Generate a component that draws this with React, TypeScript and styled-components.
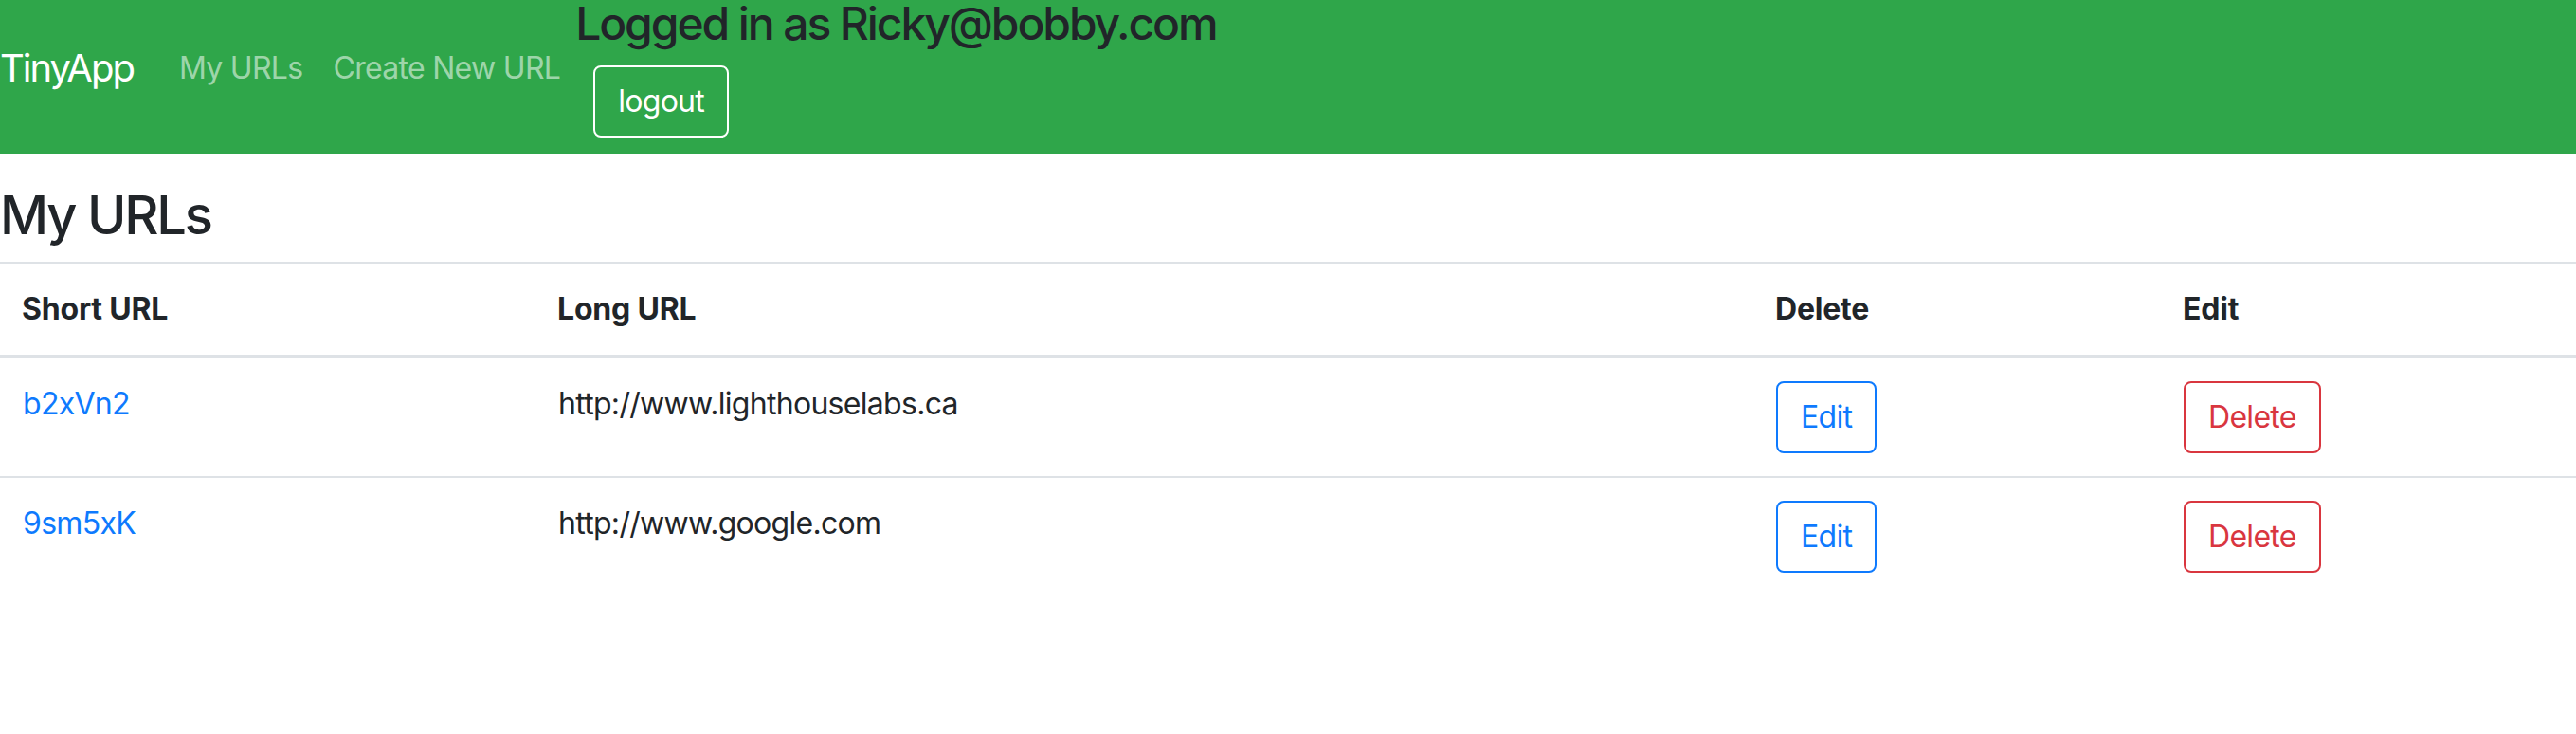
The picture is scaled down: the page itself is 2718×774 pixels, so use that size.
import React from "react";
import styled, { createGlobalStyle } from "styled-components";

const GlobalStyle = createGlobalStyle`
  html, body {
    margin: 0;
    padding: 0;
    background: #ffffff;
  }
  body {
    font-family: Inter, "Noto Sans", "Liberation Sans", sans-serif;
    font-size: 32px;
    line-height: 48px;
    letter-spacing: -0.7px;
    color: #212529;
  }
  * { box-sizing: border-box; }
`;

const Navbar = styled.nav`
  display: flex;
  align-items: center;
  background: #2fa64a;
  padding: 0 0 17px 0;
`;

const Brand = styled.a`
  font-size: 40px;
  line-height: 60px;
  letter-spacing: -2px;
  padding: 10px 0;
  margin-right: 32px;
  color: #ffffff;
  text-decoration: none;
  white-space: nowrap;
`;

const NavLink = styled.a`
  padding: 16px;
  font-size: 32px;
  line-height: 48px;
  color: rgba(255, 255, 255, 0.55);
  text-decoration: none;
  white-space: nowrap;
`;

const UserBlock = styled.div`
  display: flex;
  flex-direction: column;
  align-items: flex-start;
`;

const LoggedIn = styled.h4`
  margin: -4px 0 15px 0;
  font-size: 48px;
  line-height: 57.6px;
  letter-spacing: -2.1px;
  font-weight: 500;
  color: #212529;
  white-space: nowrap;
`;

const LogoutButton = styled.button`
  margin-left: 19px;
  font-family: inherit;
  font-size: 32px;
  line-height: 48px;
  letter-spacing: -0.7px;
  padding: 12px 24px;
  border: 2px solid #ffffff;
  border-radius: 8px;
  background: transparent;
  color: #ffffff;
`;

const Main = styled.main`
  padding-top: 32px;
`;

const Title = styled.h3`
  margin: 0 0 15px 0;
  font-size: 56px;
  line-height: 67.2px;
  letter-spacing: -2.2px;
  font-weight: 500;
`;

const Table = styled.table`
  width: 100%;
  border-collapse: collapse;
  table-layout: fixed;
`;

const HeadCell = styled.th`
  text-align: left;
  vertical-align: bottom;
  padding: 24px 24px 24px 23px;
  font-weight: 700;
  letter-spacing: -0.2px;
  border-top: 2px solid #dee2e6;
  border-bottom: 4px solid #dee2e6;
  white-space: nowrap;
`;

const Cell = styled.td`
  vertical-align: top;
  padding: 24px;
  border-top: 2px solid #dee2e6;
  white-space: nowrap;
`;

const ShortLink = styled.a`
  color: #0e7afe;
  text-decoration: none;
`;

const OutlineButton = styled.button<{ $tone: "primary" | "danger" }>`
  font-family: inherit;
  font-size: 32px;
  line-height: 48px;
  letter-spacing: -0.7px;
  padding: 12px 24px;
  border-radius: 8px;
  background: transparent;
  border: 2px solid ${(p) => (p.$tone === "primary" ? "#0e7afe" : "#d9363f")};
  color: ${(p) => (p.$tone === "primary" ? "#0e7afe" : "#d9363f")};
`;

const urls = [
  { id: "b2xVn2", long: "http://www.lighthouselabs.ca" },
  { id: "9sm5xK", long: "http://www.google.com" },
];

export default function App() {
  return (
    <>
      <GlobalStyle />
      <Navbar>
        <Brand href="#">TinyApp</Brand>
        <NavLink href="#">My URLs</NavLink>
        <NavLink href="#">Create New URL</NavLink>
        <UserBlock>
          <LoggedIn>Logged in as Ricky@bobby.com</LoggedIn>
          <LogoutButton>logout</LogoutButton>
        </UserBlock>
      </Navbar>
      <Main>
        <Title>My URLs</Title>
        <Table>
          <colgroup>
            <col style={{ width: 565 }} />
            <col style={{ width: 1285 }} />
            <col style={{ width: 430 }} />
            <col />
          </colgroup>
          <thead>
            <tr>
              <HeadCell>Short URL</HeadCell>
              <HeadCell>Long URL</HeadCell>
              <HeadCell>Delete</HeadCell>
              <HeadCell>Edit</HeadCell>
            </tr>
          </thead>
          <tbody>
            {urls.map((u) => (
              <tr key={u.id}>
                <Cell>
                  <ShortLink href="#">{u.id}</ShortLink>
                </Cell>
                <Cell>{u.long}</Cell>
                <Cell>
                  <OutlineButton $tone="primary">Edit</OutlineButton>
                </Cell>
                <Cell>
                  <OutlineButton $tone="danger">Delete</OutlineButton>
                </Cell>
              </tr>
            ))}
          </tbody>
        </Table>
      </Main>
    </>
  );
}
